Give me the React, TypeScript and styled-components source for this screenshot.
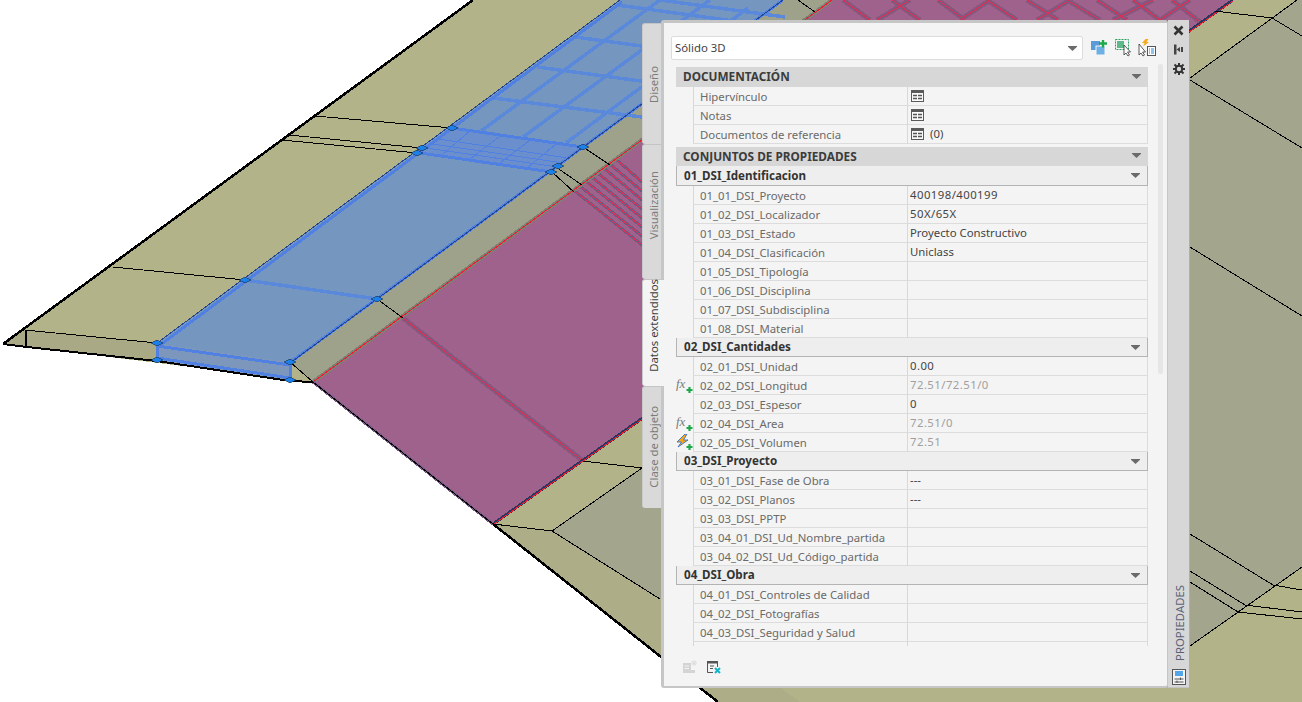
import React from "react";
import styled, { createGlobalStyle } from "styled-components";

const GlobalStyle = createGlobalStyle`
  html, body { margin: 0; padding: 0; background: #fff; }
  body { font-family: "Noto Sans", "Open Sans", sans-serif; }
`;

type Row = { name: string; value?: string; muted?: boolean; mark?: "fx" | "bolt"; table?: boolean };
type Group = { title: string; tall?: boolean; rows: Row[] };

const documentRows: Row[] = [
  { name: "Hipervínculo", table: true },
  { name: "Notas", table: true },
  { name: "Documentos de referencia", table: true, value: "(0)" },
];

const groups: Group[] = [
  {
    title: "01_DSI_Identificacion",
    tall: true,
    rows: [
      { name: "01_01_DSI_Proyecto", value: "400198/400199" },
      { name: "01_02_DSI_Localizador", value: "50X/65X" },
      { name: "01_03_DSI_Estado", value: "Proyecto Constructivo" },
      { name: "01_04_DSI_Clasificación", value: "Uniclass" },
      { name: "01_05_DSI_Tipología" },
      { name: "01_06_DSI_Disciplina" },
      { name: "01_07_DSI_Subdisciplina" },
      { name: "01_08_DSI_Material" },
    ],
  },
  {
    title: "02_DSI_Cantidades",
    rows: [
      { name: "02_01_DSI_Unidad", value: "0.00" },
      { name: "02_02_DSI_Longitud", value: "72.51/72.51/0", muted: true, mark: "fx" },
      { name: "02_03_DSI_Espesor", value: "0" },
      { name: "02_04_DSI_Area", value: "72.51/0", muted: true, mark: "fx" },
      { name: "02_05_DSI_Volumen", value: "72.51", muted: true, mark: "bolt" },
    ],
  },
  {
    title: "03_DSI_Proyecto",
    rows: [
      { name: "03_01_DSI_Fase de Obra", value: "---" },
      { name: "03_02_DSI_Planos", value: "---" },
      { name: "03_03_DSI_PPTP" },
      { name: "03_04_01_DSI_Ud_Nombre_partida" },
      { name: "03_04_02_DSI_Ud_Código_partida" },
    ],
  },
  {
    title: "04_DSI_Obra",
    rows: [
      { name: "04_01_DSI_Controles de Calidad" },
      { name: "04_02_DSI_Fotografías" },
      { name: "04_03_DSI_Seguridad y Salud" },
      { name: "" },
    ],
  },
];

const tabs = [
  { label: "Diseño", height: 121, pad: 41 },
  { label: "Visualización", height: 135, pad: 40 },
  { label: "Datos extendidos", height: 107, pad: 14, active: true },
  { label: "Clase de objeto", height: 122, pad: 20 },
];

const thinLines = [
  "M315 116L452 128", "M289 135L422 148", "M282 140L417 153", "M113 267L245 280",
  "M25 330L157 343", "M290 362L313 382",
  "M583 147L610 165", "M556 167L582 185", "M552 172L574 192", "M377 299L403 318",
  "M798 0L815 12",
  "M493 524L552 531L642 468", "M583 461L642 468", "M552 531L660 599",
  "M1215 11L1272 18L1302 36", "M1190 78L1297 0", "M1190 80L1302 148", "M1190 247L1302 316",
  "M1190 534L1273 585", "M1190 571L1245 605", "M1190 582L1238 612", "M1190 646L1302 567",
  "M1238 612L1302 619", "M1245 605L1302 612", "M1273 585L1302 590",
];

const gripPoints = [
  [157, 343], [157, 360], [290, 362], [290, 380], [245, 280], [377, 299],
  [422, 148], [417, 153], [452, 128], [583, 147], [558, 166], [551, 172],
];

const blueParallels = [
  "M481 131L660 0", "M523 137L710 0", "M566 143L748 8",
];
const blueCross = [
  "M245 280L377 299", "M493 98L642 117", "M537 67L700 89", "M575 37L738 59", "M617 5L770 26", "M660 0L785 17",
];

const magentaBands = [
  "M403 318L583 461", "M843 0L870 20", "M892 0L920 20", "M938 0L965 20", "M987 0L1017 20",
  "M1027 0L1058 20", "M1067 0L1100 20", "M1097 0L1127 20", "M1133 0L1160 20", "M1172 0L1200 22",
  "M877 20L910 0", "M960 20L990 0", "M1037 20L1070 0", "M1113 20L1153 0", "M1160 20L1190 0",
];

const hatchLines = [
  "M575 191L642 245", "M581 187L642 236", "M587 182L642 227", "M593 178L642 218",
  "M599 174L642 209", "M605 169L642 200", "M611 165L642 191", "M617 160L642 182",
];

function ModelScene() {
  return (
    <Scene viewBox="0 0 1302 702" shapeRendering="crispEdges">
      <polygon points="3,344 473,0 1302,0 1302,702 718,702 493,524 313,382" fill="#b3b38a" />
      <polygon points="3,344 25,330 157,343 157,360" fill="#a9a985" />
      <polygon points="552,531 642,468 700,440 700,640 660,599" fill="#a3a68c" />
      <polygon points="1190,78 1297,0 1302,0 1302,567 1190,646" fill="#a3a68c" />
      <polygon points="552,531 660,599 800,702 718,702 493,524" fill="#adad88" />
      <polygon points="290,363 783,0 832,0 313,382" fill="#9fa28a" />

      <polygon points="157,343 620,0 783,0 290,363" fill="#7596be" />
      <polygon points="157,343 290,362 290,380 157,360" fill="#7d97bc" />
      <polygon points="452,128 583,147 552,172 420,153" fill="#6a8fcc" />
      <g stroke="#5a88da" strokeWidth="3.5" fill="none">
        {blueParallels.map((d) => <path key={d} d={d} />)}
        {blueCross.map((d) => <path key={d} d={d} />)}
      </g>
      <g stroke="#4f80e2" strokeWidth="1" fill="none">
        <path d="M438 139L568 158" />
        <path d="M432 144L564 163" />
        <path d="M426 148L558 167" />
        <path d="M470 131L442 155" />
        <path d="M500 136L470 159" />
        <path d="M530 140L500 163" />
        <path d="M556 144L528 167" />
      </g>
      <g stroke="#4f80e2" strokeWidth="3" fill="none">
        <path d="M160 345L622 2" />
        <path d="M288 364L783 0" />
        <path d="M157 346L290 365" />
        <path d="M157 358L290 378" />
        <path d="M420 153L552 172" />
        <path d="M452 128L583 147" />
        <path d="M157 345V360" />
        <path d="M290 364V380" />
      </g>
      <g stroke="#23468f" strokeWidth="1" fill="none">
        <path d="M157 343L620 0" />
        <path d="M290 363L783 0" />
      </g>

      <polygon points="313,382 493,524 1233,0 832,0" fill="#9e628c" />
      <g fill="none">
        {magentaBands.map((d) => <path key={d} d={d} stroke="#86577f" strokeWidth="5" />)}
        {magentaBands.map((d) => <path key={d + "r"} d={d} stroke="#d92f55" strokeWidth="1" />)}
        {hatchLines.map((d) => <path key={d} d={d} stroke="#6d5a80" strokeWidth="3" />)}
        {hatchLines.map((d) => <path key={d + "r"} d={d} stroke="#e0305a" strokeWidth="1" />)}
        <path d="M313 382L832 0" stroke="#7f7f76" strokeWidth="4" />
        <path d="M493 524L1233 0" stroke="#2c3560" strokeWidth="3" />
        <path d="M313 382L493 524" stroke="#7c5a86" strokeWidth="3" />
        <path d="M313 382L832 0" stroke="#ee1c2e" strokeWidth="1" />
        <path d="M494 524L1233 1" stroke="#ee1c2e" strokeWidth="1" />
      </g>

      <g stroke="#000" strokeWidth="1" fill="none">
        {thinLines.map((d) => <path key={d} d={d} />)}
      </g>
      <g stroke="#000" fill="none">
        <path d="M3 344L473 0" strokeWidth="2.5" />
        <path d="M3 344L27 347L157 361L290 381L313 382" strokeWidth="2" />
        <path d="M26 330V347" strokeWidth="2" />
        <path d="M313 382L493 524" strokeWidth="1" />
        <path d="M493 524L718 702" strokeWidth="2.5" />
      </g>
      <g fill="#1d7fe8" stroke="#123" strokeWidth="0.5">
        {gripPoints.map(([x, y]) => (
          <polygon key={`${x}-${y}`} points={`${x - 6},${y} ${x},${y - 3} ${x + 6},${y} ${x},${y + 3}`} />
        ))}
      </g>
    </Scene>
  );
}

function TableIcon() {
  return (
    <CellIcon width="14" height="13" viewBox="0 0 14 13">
      <rect x="0.5" y="0.5" width="12" height="11" fill="#fafafa" stroke="#5a5a5a" />
      <rect x="0" y="0" width="13" height="3" fill="#5a5a5a" />
      <path d="M2 5.5H6M7 5.5H11M2 8.5H6M7 8.5H11" stroke="#555" strokeWidth="1.4" />
    </CellIcon>
  );
}

function ArrowIcon({ size = 9 }: { size?: number }) {
  return (
    <svg width={size} height="5" viewBox="0 0 10 6" preserveAspectRatio="none">
      <path d="M0 0H10V1L5 6L0 1Z" fill="#6a6a6a" />
    </svg>
  );
}

function RowMark({ kind }: { kind: "fx" | "bolt" }) {
  return (
    <svg width="17" height="17" viewBox="0 0 17 17">
      {kind === "fx" ? (
        <text x="0" y="11" fontFamily="Liberation Serif, serif" fontStyle="italic" fontSize="13" fill="#7a7a7a">
          fx
        </text>
      ) : (
        <path d="M9 0L1 8H5.500L2 13L12 6H7.500L11 0Z" fill="#f5a81c" stroke="#3a6fc4" strokeWidth="0.9" />
      )}
      <path d="M10.500 13H16.500M13.500 10V16" stroke="#1fa84a" strokeWidth="2.2" />
    </svg>
  );
}

function PropRow({ row }: { row: Row }) {
  return (
    <RowLine>
      <MarkCell>{row.mark && <RowMark kind={row.mark} />}</MarkCell>
      <NameCell>{row.name}</NameCell>
      <ValueCell $muted={row.muted} $digits={/^[\d.\/X]+$/.test(row.value ?? "")}>
        {row.table && <TableIcon />}
        {row.value}
      </ValueCell>
    </RowLine>
  );
}

export default function App() {
  return (
    <Stage>
      <GlobalStyle />
      <ModelScene />
      <Palette>
        <TabColumn>
          {tabs.map((t) => (
            <Tab key={t.label} $height={t.height} $pad={t.pad} $active={t.active}>
              <span>{t.label}</span>
            </Tab>
          ))}
        </TabColumn>

        <Body>
          <Toolbar>
            <Combo>
              Sólido 3D
              <ArrowIcon />
            </Combo>
            <ToolIcons>
              <svg width="18" height="18" viewBox="0 0 18 18">
                <rect x="1" y="2" width="9" height="9" fill="#5b9bd8" />
                <rect x="6" y="7" width="9" height="9" fill="#6cb0e6" stroke="#f4f4f4" />
                <path d="M9 4.500H17M13 1V8.500" stroke="#1fa84a" strokeWidth="2.400" />
              </svg>
              <svg width="18" height="18" viewBox="0 0 18 18">
                <rect x="1.500" y="0.500" width="13" height="10" fill="none" stroke="#27a060" strokeDasharray="2 1" />
                <rect x="3" y="2" width="7" height="7" fill="#5cb98a" />
                <path d="M10 6V16L12 14L14 17L15.500 16L13.500 13H16.500Z" fill="#fff" stroke="#333" strokeWidth="0.800" />
              </svg>
              <svg width="18" height="18" viewBox="0 0 18 18">
                <path d="M5.500 0L2 4H4.500L3 7.500L9 3H6.500L8.500 0Z" transform="translate(2 0)" fill="#f7a81b" />
                <path d="M1 5V16L3 14L5 17L6.500 16L4.500 13H7.500Z" fill="#fff" stroke="#333" strokeWidth="0.800" />
                <rect x="9.500" y="7.500" width="8" height="9" fill="#fff" stroke="#555" />
                <path d="M11 10H12M13 10H16M11 12H12M13 12H16M11 14H12M13 14H16" stroke="#1f88e0" />
              </svg>
            </ToolIcons>
          </Toolbar>

          <PropList>
            <SectionHead $height={20}>
              DOCUMENTACIÓN
              <ArrowIcon />
            </SectionHead>
            {documentRows.map((r) => <PropRow key={r.name} row={r} />)}
            <SectionGap />
            <SectionHead $height={19}>
              CONJUNTOS DE PROPIEDADES
              <ArrowIcon />
            </SectionHead>
            {groups.map((g) => (
              <React.Fragment key={g.title}>
                <GroupHead $height={g.tall ? 20 : 19}>
                  {g.title}
                  <ArrowIcon />
                </GroupHead>
                {g.rows.map((r, i) => <PropRow key={g.title + i} row={r} />)}
              </React.Fragment>
            ))}
          </PropList>

          <Footer>
            <svg width="16" height="16" viewBox="0 0 16 16">
              <path d="M1 4H9V14H1Z" fill="#d4d4d4" />
              <path d="M2.500 7H7M2.500 9.500H7" stroke="#f2f2f2" />
              <path d="M9 11H13V14H9Z" fill="#d4d4d4" />
              <path d="M12 1V7M9 4H15M10 2L14 6M14 2L10 6" stroke="#dcdcdc" />
            </svg>
            <svg width="16" height="16" viewBox="0 0 16 16">
              <path d="M1.500 2.500H11.500V8M1.500 2.500V13.500H7" fill="none" stroke="#555" />
              <rect x="1" y="2" width="11" height="2.500" fill="#555" />
              <path d="M4 7H8M4 9.500H7" stroke="#555" />
              <path d="M9 9L14 14M14 9L9 14" stroke="#12b5c9" strokeWidth="2" />
            </svg>
          </Footer>

          <ScrollTrack />
        </Body>

        <SideStrip>
          <svg width="11" height="11" viewBox="0 0 11 11">
            <path d="M1.500 1.500L9.500 9.500M9.500 1.500L1.500 9.500" stroke="#333" strokeWidth="2.600" />
          </svg>
          <svg width="11" height="11" viewBox="0 0 11 11">
            <rect x="1" y="0.500" width="2.500" height="10" fill="#444" />
            <path d="M3.500 5.500L7 3V8ZM8 3H10V8H8Z" fill="#444" />
          </svg>
          <svg width="12" height="12" viewBox="0 0 12 12">
            <circle cx="6" cy="6" r="3.200" fill="none" stroke="#333" strokeWidth="2" />
            <path d="M6 0V2.500M6 9.500V12M0 6H2.500M9.500 6H12M1.500 1.500L3.500 3.500M8.500 8.500L10.500 10.500M10.500 1.500L8.500 3.500M3.500 8.500L1.500 10.500" stroke="#333" strokeWidth="2" />
          </svg>
          <StripTitle>PROPIEDADES</StripTitle>
          <svg width="14" height="16" viewBox="0 0 14 16">
            <rect x="0.500" y="0.500" width="13" height="15" fill="#f4f4f4" stroke="#555" />
            <rect x="3" y="2" width="8" height="5" fill="#56a5e6" />
            <path d="M2.500 10H11.500M2.500 13H11.500M8.500 8.500V11M5 11.500V14" stroke="#555" />
          </svg>
        </SideStrip>
      </Palette>
    </Stage>
  );
}

const Stage = styled.div`
  position: relative;
  width: 1302px;
  height: 702px;
  overflow: hidden;
  background: #fff;
`;

const Scene = styled.svg`
  position: absolute;
  left: 0;
  top: 0;
  width: 1302px;
  height: 702px;
`;

const Palette = styled.div`
  position: absolute;
  left: 642px;
  top: 20px;
  width: 547px;
  height: 668px;
  display: flex;
  align-items: stretch;
  font-size: 11.35px;
  line-height: 16px;
`;

const TabColumn = styled.div`
  width: 19px;
  flex: none;
  padding-top: 3px;
  display: flex;
  flex-direction: column;
`;

const Tab = styled.div<{ $height: number; $pad: number; $active?: boolean }>`
  box-sizing: border-box;
  height: ${(p) => p.$height}px;
  width: ${(p) => (p.$active ? 22 : 20)}px;
  margin-right: ${(p) => (p.$active ? -3 : -1)}px;
  padding: 0 ${(p) => (p.$active ? 2 : 0)}px ${(p) => p.$pad}px 2px;
  position: relative;
  z-index: ${(p) => (p.$active ? 1 : 0)};
  display: flex;
  align-items: flex-end;
  justify-content: center;
  background: ${(p) => (p.$active ? "#f4f4f4" : "#d9d9d9")};
  color: ${(p) => (p.$active ? "#3f3f3f" : "#7b7b7b")};
  border-left: 1px solid #c9c9c9;
  border-top: 1px solid #c4c4c4;
  border-radius: 3px 0 0 3px;

  span {
    writing-mode: vertical-rl;
    transform: rotate(180deg);
    white-space: nowrap;
  }
`;

const Body = styled.div`
  position: relative;
  box-sizing: border-box;
  width: 507px;
  flex: none;
  background: #f4f4f4;
  border: solid #c6c6c6;
  border-width: 3px 1px 2px 3px;
  border-radius: 3px;
  padding: 13px 0 0 7px;
`;

const Toolbar = styled.div`
  display: flex;
  align-items: center;
  height: 24px;
  margin-bottom: 7px;
`;

const Combo = styled.div`
  box-sizing: border-box;
  width: 412px;
  height: 24px;
  display: flex;
  align-items: center;
  justify-content: space-between;
  padding: 0 5px 0 3px;
  background: #fff;
  border: 1px solid #dcdcdc;
  border-radius: 2px;
  color: #444;
`;

const ToolIcons = styled.div`
  display: flex;
  gap: 6px;
  margin-left: 7px;
`;

const PropList = styled.div`
  width: 472px;
  height: 579px;
  margin-left: 5px;
  overflow: hidden;
`;

const SectionHead = styled.div<{ $height: number }>`
  box-sizing: border-box;
  height: ${(p) => p.$height}px;
  display: flex;
  align-items: center;
  justify-content: space-between;
  padding: 0 7px 2px;
  background: #d7d7d7;
  color: #3c3c3c;
  font-size: 11.8px;
  font-weight: 700;
`;

const SectionGap = styled.div`
  height: 3px;
`;

const GroupHead = styled.div<{ $height: number }>`
  box-sizing: border-box;
  height: ${(p) => p.$height}px;
  display: flex;
  align-items: center;
  justify-content: space-between;
  padding: 0 7px;
  background: #eeeeee;
  border: 1px solid #b4b4b4;
  border-width: 0 1px 1px 1px;
  color: #333;
  font-size: 11.6px;
  font-weight: 700;
`;

const RowLine = styled.div`
  height: 19px;
  display: flex;
`;

const MarkCell = styled.div`
  width: 17px;
  flex: none;
  display: flex;
  align-items: center;
  justify-content: flex-end;
`;

const NameCell = styled.div`
  box-sizing: border-box;
  width: 214px;
  flex: none;
  padding: 2px 0 0 6px;
  border-left: 1px solid #d8d8d8;
  border-bottom: 1px solid #dcdcdc;
  color: #6a6a6a;
  white-space: nowrap;
`;

const ValueCell = styled.div<{ $muted?: boolean; $digits?: boolean }>`
  box-sizing: border-box;
  flex: 1;
  display: flex;
  align-items: center;
  gap: 5px;
  padding-left: 2px;
  border-left: 1px solid #d8d8d8;
  border-right: 1px solid #dcdcdc;
  border-bottom: 1px solid #dcdcdc;
  letter-spacing: ${(p) => (p.$digits ? "0.45px" : "0")};
  color: ${(p) => (p.$muted ? "#a0a0a0" : "#444")};
`;

const CellIcon = styled.svg`
  margin-left: 1px;
`;

const Footer = styled.div`
  display: flex;
  gap: 8px;
  margin-top: 13px;
  margin-left: 11px;
`;

const ScrollTrack = styled.div`
  position: absolute;
  left: 494px;
  top: 41px;
  width: 5px;
  height: 310px;
  border-radius: 2px;
  background: #e6e6e6;
`;

const SideStrip = styled.div`
  box-sizing: border-box;
  width: 21px;
  flex: none;
  display: flex;
  flex-direction: column;
  align-items: center;
  gap: 8px;
  padding: 5px 0 2px;
  background: #d7d7d7;
  border-bottom: 1px solid #c4c4c4;
`;

const StripTitle = styled.div`
  margin-top: auto;
  margin-left: 3px;
  writing-mode: vertical-rl;
  transform: rotate(180deg);
  color: #5a6076;
`;
